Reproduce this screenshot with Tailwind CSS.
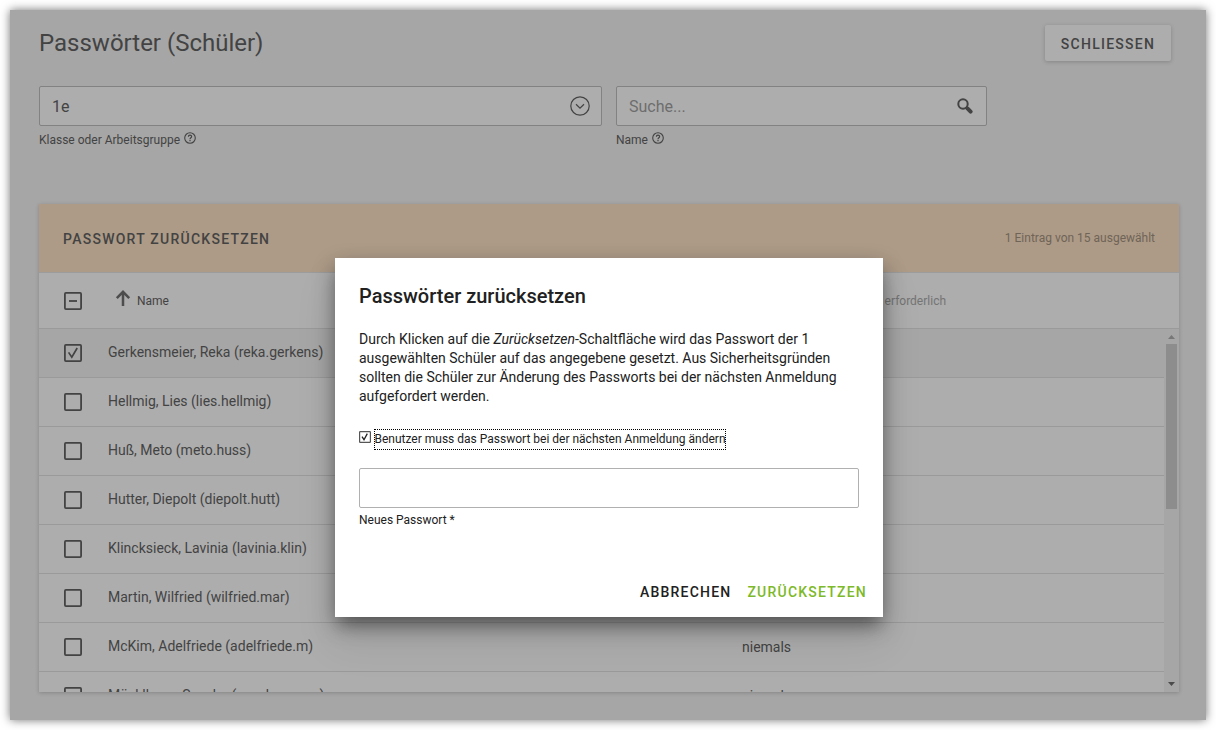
<!DOCTYPE html>
<html lang="de">
<head>
<meta charset="utf-8">
<title>Passwörter (Schüler)</title>
<script src="https://cdn.jsdelivr.net/npm/@tailwindcss/browser@4"></script>
</head>
<body class="h-[730px] w-[1216px] overflow-hidden bg-white p-[10px] font-[Roboto,sans-serif] text-[#434343]">
<svg class="hidden">
  <symbol id="help" viewBox="0 0 12 12"><circle cx="6" cy="6" r="5.3" fill="none" stroke="currentColor" stroke-width="1.1"/><path d="M4.4 4.8C4.4 2.7 7.6 2.7 7.6 4.7C7.6 5.8 6 5.9 6 7.2M6 8.1V9.2" fill="none" stroke="currentColor" stroke-width="1.2"/></symbol>
</svg>
<main class="relative h-[710px] w-[1196px] bg-[#a6a6a6] shadow-[0_0_9px_rgba(0,0,0,0.55)]">
  <header class="flex h-[76px] items-start justify-between pl-[29px] pr-[35px]">
    <h1 class="pt-[17px] text-[24px] leading-8">Passwörter (Schüler)</h1>
    <button class="mt-[15px] h-9 w-[126px] rounded-[2px] bg-[#adadad] pt-[2px] text-[14px] font-medium tracking-[1.25px] shadow-[0_1px_4px_rgba(0,0,0,0.2)]">SCHLIESSEN</button>
  </header>
  <section class="flex h-[118px] gap-[14px] pl-[29px]">
    <div class="w-[563px]">
      <div class="flex h-10 items-center justify-between rounded-[2px] border border-[#828282] bg-[#adadad] pl-3 pr-[11px] text-[16px]">
        <span class="pt-[2px]">1e</span>
        <svg class="size-5" viewBox="0 0 20 20" fill="none" stroke="currentColor" stroke-width="1.2"><circle cx="10" cy="10" r="9.2"/><path d="M6 8.3L10 12.2L14 8.3"/></svg>
      </div>
      <div class="flex items-start gap-1 pt-[5px] text-[12px] leading-[18px]"><span>Klasse oder Arbeitsgruppe</span><svg class="mt-px size-3"><use href="#help"/></svg></div>
    </div>
    <div class="w-[371px]">
      <div class="flex h-10 items-center justify-between rounded-[2px] border border-[#828282] bg-[#adadad] pl-3 pr-[13px] text-[16px]">
        <span class="pt-[2px] text-[#6d6d6d]">Suche...</span>
        <svg class="size-4" viewBox="0 0 16 16" fill="none" stroke="currentColor"><circle cx="6" cy="6" r="4.7" stroke-width="2"/><path d="M9.3 9.3L10.5 10.5" stroke-width="2.2"/><path d="M10.7 10.7L13.6 13.6" stroke-width="4" stroke-linecap="round"/></svg>
      </div>
      <div class="flex items-start gap-1 pt-[5px] text-[12px] leading-[18px]"><span>Name</span><svg class="mt-px size-3"><use href="#help"/></svg></div>
    </div>
  </section>
  <section class="ml-[29px] h-[488px] w-[1140px] overflow-hidden bg-[#adadad] shadow-[0_1px_4px_rgba(0,0,0,0.2)]">
    <div class="flex h-[69px] items-center justify-between border-b border-[#9c9c9c] bg-[#ad9b87] px-6">
      <span class="pt-[3px] text-[14px] font-medium tracking-[1.25px]">PASSWORT ZURÜCKSETZEN</span>
      <span class="text-[12px] text-[#706457]">1 Eintrag von 15 ausgewählt</span>
    </div>
    <div class="flex h-14 items-center border-b border-[#9a9a9a] pl-[25px] text-[12px]">
      <svg class="mr-[33px] size-[18px]" viewBox="0 0 18 18" fill="none" stroke="currentColor" stroke-width="1.8"><rect x=".9" y=".9" width="16.2" height="16.2" rx="1"/><path d="M5 9H13"/></svg>
      <svg class="mb-[5px] mr-[6px] h-4 w-[16px]" viewBox="0 0 16 16" fill="none" stroke="#4d4d4d" stroke-width="2.5"><path d="M8 16V1.8M1.8 8.2L8 1.8L14.2 8.2"/></svg>
      <span class="w-[693px]">Name</span>
      <span class="w-[116px] whitespace-nowrap text-right text-[#747474]">Änderung erforderlich</span>
    </div>
    <div class="flex h-[363px]">
      <ul id="rows" class="w-[1125px] overflow-hidden"></ul>
      <div class="flex w-[15px] flex-col items-center bg-[#a6a6a6] pt-[6px]">
        <svg class="h-1 w-[7px]" viewBox="0 0 7 4"><path d="M0 4L3.5 0L7 4Z" fill="#777"/></svg>
        <div class="mt-[5px] h-[165px] w-[11px] bg-[#8d8d8d]"></div>
        <svg class="mt-[173px] h-1 w-[7px] shrink-0" viewBox="0 0 7 4"><path d="M0 0H7L3.5 4Z" fill="#4b4b4b"/></svg>
      </div>
    </div>
  </section>
  <div role="dialog" class="absolute left-[325px] top-[248px] h-[359px] w-[548px] bg-white px-6 text-[#212121] shadow-[0_11px_15px_-7px_rgba(0,0,0,0.2),0_24px_38px_3px_rgba(0,0,0,0.08),0_9px_20px_0_rgba(0,0,0,0.38)]">
    <h2 class="pt-[22px] text-[20px] font-medium leading-8">Passwörter zurücksetzen</h2>
    <p class="mt-[18px] whitespace-nowrap text-[14px] leading-[19px]">Durch Klicken auf die <i>Zurücksetzen</i>-Schaltfläche wird das Passwort der 1<br>ausgewählten Schüler auf das angegebene gesetzt. Aus Sicherheitsgründen<br>sollten die Schüler zur Änderung des Passworts bei der nächsten Anmeldung<br>aufgefordert werden.</p>
    <div class="mt-[24px] flex items-start">
      <svg class="mr-[3px] mt-[1px] size-3" viewBox="0 0 12 12" fill="none"><rect x=".6" y=".6" width="10.8" height="10.8" rx=".6" stroke="#555" stroke-width="1.2"/><path d="M3 5.7L5 8.7L8.3 2.6" stroke="#212121" stroke-width="1.3"/></svg>
      <span class="-mt-px h-[21px] w-[352px] whitespace-nowrap border border-dotted border-black text-[12px] leading-[18px]"><span class="-ml-[0.5px]">Benutzer muss das Passwort bei der nächsten Anmeldung ändern</span></span>
    </div>
    <div class="mt-[18px] h-10 rounded-[2px] border border-[#b0b0b0]"></div>
    <div class="mt-[3px] text-[12px] leading-[18px]">Neues Passwort *</div>
    <div class="-mr-2 mt-[53px] flex justify-end gap-4 text-[14px] font-medium leading-5 tracking-[1.22px]">
      <span>ABBRECHEN</span><span class="text-[#7db928]">ZURÜCKSETZEN</span>
    </div>
  </div>
</main>
<script>
const names = ['Gerkensmeier, Reka (reka.gerkens)', 'Hellmig, Lies (lies.hellmig)', 'Huß, Meto (meto.huss)', 'Hutter, Diepolt (diepolt.hutt)', 'Klincksieck, Lavinia (lavinia.klin)', 'Martin, Wilfried (wilfried.mar)', 'McKim, Adelfriede (adelfriede.m)', 'Mücklhaus, Sascha (sascha.muec)'];
document.getElementById('rows').innerHTML = names.map((n, i) => `
<li class="flex h-[49px] items-center border-b border-[#9a9a9a] pl-[25px] text-[14px] ${i ? '' : 'bg-[#a6a6a6]'}">
  <svg class="mr-[26px] size-[18px]" viewBox="0 0 18 18" fill="none" stroke="currentColor" stroke-width="1.8"><rect x=".9" y=".9" width="16.2" height="16.2" rx="1"/>${i ? '' : '<path d="M4.6 8.4L7.8 13.2L13.2 4" stroke-width="1.7"/>'}</svg>
  <span class="w-[634px] pb-[2px]">${n}</span>${i < 6 ? '' : '<span>niemals</span>'}
</li>`).join('');
</script>
</body>
</html>
